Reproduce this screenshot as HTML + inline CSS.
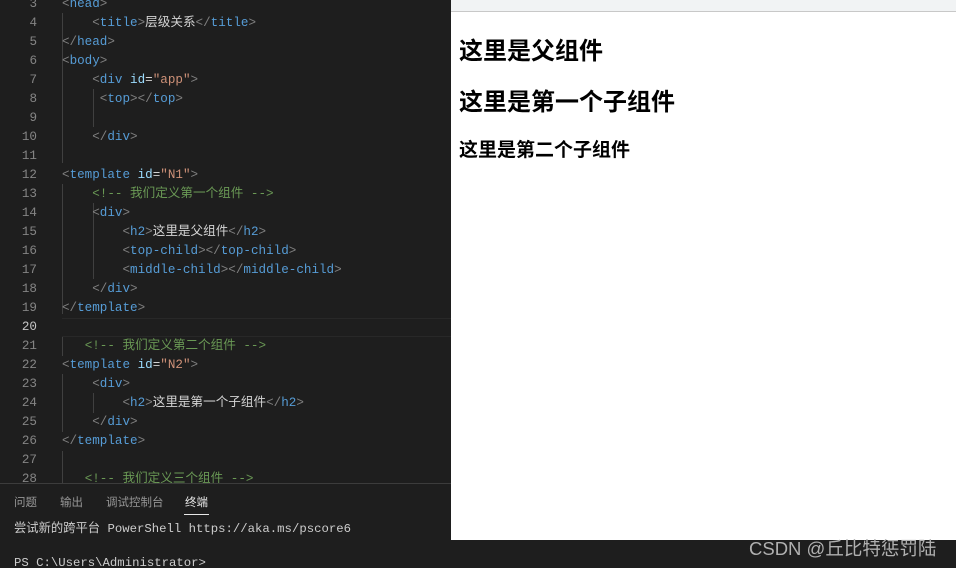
<!DOCTYPE html>
<html><head><meta charset="utf-8"><style>
*{margin:0;padding:0;box-sizing:border-box}
html,body{width:956px;height:568px;overflow:hidden}
body{background:#1e1e1e;position:relative;font-family:"Liberation Mono","Noto Sans CJK SC",monospace;}
.ln{position:absolute;left:0;width:37px;text-align:right;color:#858585;font-size:12.6px;line-height:19px}
.cd{position:absolute;left:62px;color:#d4d4d4;font-size:12.6px;line-height:19px;white-space:pre}
.t{color:#569cd6}.p{color:#808080}.a{color:#9cdcfe}.s{color:#ce9178}.c{color:#6a9955}.w{color:#d4d4d4}
.guide{position:absolute;width:1px;background:#404040}
#br{position:absolute;left:451px;top:0;width:505px;height:540px;background:#fff}
#br .bar{height:12px;background:#f1f3f4;border-bottom:1px solid #c8c8c8}
#br h2{position:absolute;left:8px;font-family:"Liberation Sans","Noto Sans CJK SC",sans-serif;font-weight:bold;color:#000}
.tab{position:absolute;top:494px;font-family:'Liberation Sans','Noto Sans CJK SC',sans-serif;font-size:11.5px;color:#969696}
</style></head><body>
<div class="guide" style="left:62px;top:13px;height:150px"></div>
<div class="guide" style="left:62px;top:184px;height:130px"></div>
<div class="guide" style="left:62px;top:336px;height:20px"></div>
<div class="guide" style="left:62px;top:374px;height:58px"></div>
<div class="guide" style="left:62px;top:451px;height:32px"></div>
<div class="guide" style="left:93px;top:203px;height:76px"></div>
<div class="guide" style="left:93px;top:393px;height:20px"></div>
<div class="guide" style="left:93px;top:89px;height:38px"></div>
<div style="position:absolute;left:62px;top:318px;width:389px;height:19px;border-top:1px solid #282828;border-bottom:1px solid #282828"></div>
<div class="ln" style="top:-5px">3<br>4<br>5<br>6<br>7<br>8<br>9<br>10<br>11<br>12<br>13<br>14<br>15<br>16<br>17<br>18<br>19<br><span style="color:#c6c6c6">20</span><br>21<br>22<br>23<br>24<br>25<br>26<br>27<br>28</div>
<div class="cd" style="top:-5px"><span class="p">&lt;</span><span class="t">head</span><span class="p">&gt;</span>
    <span class="p">&lt;</span><span class="t">title</span><span class="p">&gt;</span>层级关系<span class="p">&lt;/</span><span class="t">title</span><span class="p">&gt;</span>
<span class="p">&lt;/</span><span class="t">head</span><span class="p">&gt;</span>
<span class="p">&lt;</span><span class="t">body</span><span class="p">&gt;</span>
    <span class="p">&lt;</span><span class="t">div</span> <span class="a">id</span>=<span class="s">"app"</span><span class="p">&gt;</span>
     <span class="p">&lt;</span><span class="t">top</span><span class="p">&gt;&lt;/</span><span class="t">top</span><span class="p">&gt;</span>

    <span class="p">&lt;/</span><span class="t">div</span><span class="p">&gt;</span>

<span class="p">&lt;</span><span class="t">template</span> <span class="a">id</span>=<span class="s">"N1"</span><span class="p">&gt;</span>
    <span class="c">&lt;!-- 我们定义第一个组件 --&gt;</span>
    <span class="p">&lt;</span><span class="t">div</span><span class="p">&gt;</span>
        <span class="p">&lt;</span><span class="t">h2</span><span class="p">&gt;</span>这里是父组件<span class="p">&lt;/</span><span class="t">h2</span><span class="p">&gt;</span>
        <span class="p">&lt;</span><span class="t">top-child</span><span class="p">&gt;&lt;/</span><span class="t">top-child</span><span class="p">&gt;</span>
        <span class="p">&lt;</span><span class="t">middle-child</span><span class="p">&gt;&lt;/</span><span class="t">middle-child</span><span class="p">&gt;</span>
    <span class="p">&lt;/</span><span class="t">div</span><span class="p">&gt;</span>
<span class="p">&lt;/</span><span class="t">template</span><span class="p">&gt;</span>

   <span class="c">&lt;!-- 我们定义第二个组件 --&gt;</span>
<span class="p">&lt;</span><span class="t">template</span> <span class="a">id</span>=<span class="s">"N2"</span><span class="p">&gt;</span>
    <span class="p">&lt;</span><span class="t">div</span><span class="p">&gt;</span>
        <span class="p">&lt;</span><span class="t">h2</span><span class="p">&gt;</span>这里是第一个子组件<span class="p">&lt;/</span><span class="t">h2</span><span class="p">&gt;</span>
    <span class="p">&lt;/</span><span class="t">div</span><span class="p">&gt;</span>
<span class="p">&lt;/</span><span class="t">template</span><span class="p">&gt;</span>

   <span class="c">&lt;!-- 我们定义三个组件 --&gt;</span></div>
<div style="position:absolute;left:0;top:483px;width:451px;height:85px;background:#1e1e1e;border-top:1px solid #3c3c3c"></div>
<div class="tab" style="left:14px">问题</div>
<div class="tab" style="left:60px">输出</div>
<div class="tab" style="left:106px">调试控制台</div>
<div class="tab" style="left:185px;color:#e7e7e7">终端</div>
<div style="position:absolute;left:184px;top:514px;width:25px;height:1px;background:#e7e7e7"></div>
<div class="cd" style="left:14px;top:520px;color:#cccccc;font-size:12.3px">尝试新的跨平台 PowerShell https://aka.ms/pscore6</div>
<div class="cd" style="left:14px;top:554px;color:#cccccc;font-size:12.3px">PS C:\Users\Administrator&gt;</div>
<div id="br"><div class="bar"></div>
<h2 style="top:31px;font-size:24px">这里是父组件</h2>
<h2 style="top:82px;font-size:24px">这里是第一个子组件</h2>
<h2 style="top:135px;font-size:19px">这里是第二个子组件</h2>
</div>
<div style="position:absolute;left:749px;top:535px;font-family:'Liberation Sans','Noto Sans CJK SC',sans-serif;font-size:18.5px;color:#b0b0b0;white-space:nowrap">CSDN @丘比特惩罚陆</div>
</body></html>
